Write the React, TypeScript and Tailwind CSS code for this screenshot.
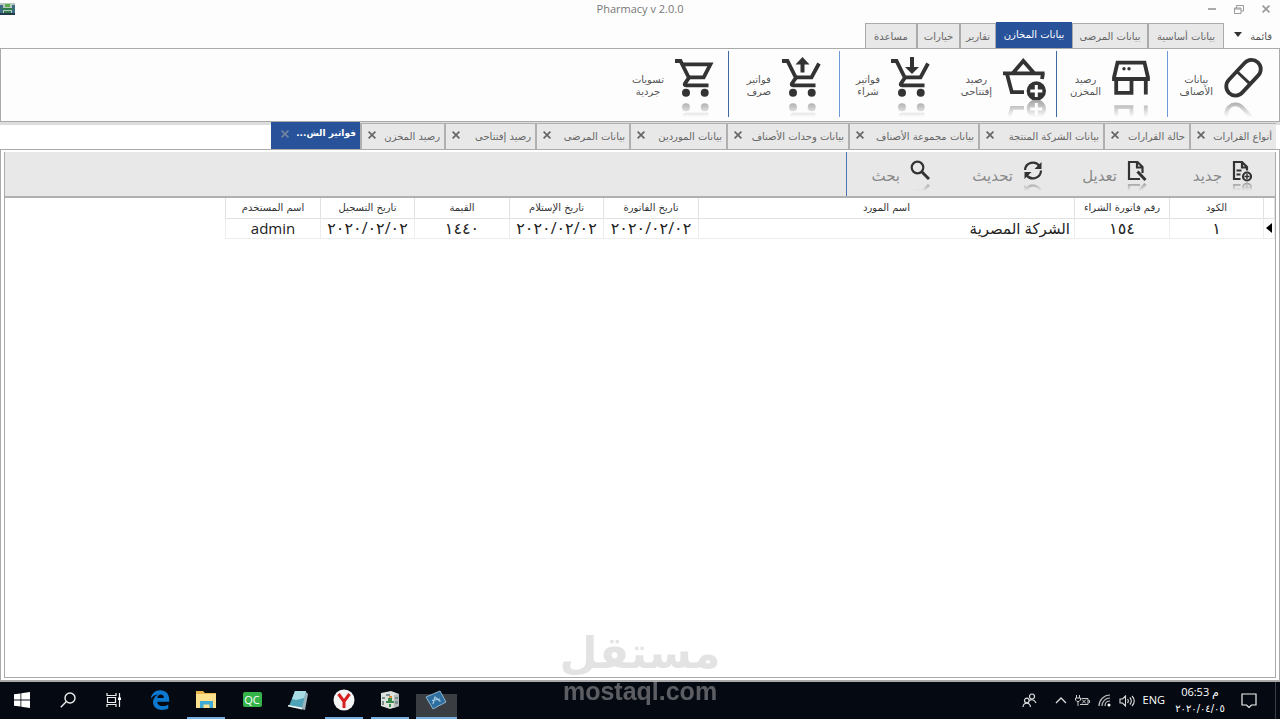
import type { ReactNode } from "react";
import clsx from "clsx";

const ribbonTabs = [
  { label: "بيانات أساسية", width: "w-[76px]" },
  { label: "بيانات المرضى", width: "w-[76px]" },
  { label: "بيانات المخازن", width: "w-[76px]", active: true },
  { label: "تقارير", width: "w-[36px]" },
  { label: "خيارات", width: "w-[43px]" },
  { label: "مساعدة", width: "w-[52px]" },
];

const docTabs = [
  { label: "أنواع القرارات", width: "w-[87px]" },
  { label: "حالة القرارات", width: "w-[86px]" },
  { label: "بيانات الشركة المنتجة", width: "w-[125px]" },
  { label: "بيانات مجموعة الأصناف", width: "w-[130px]" },
  { label: "بيانات وحدات الأصناف", width: "w-[122px]" },
  { label: "بيانات الموردين", width: "w-[97px]" },
  { label: "بيانات المرضى", width: "w-[94px]" },
  { label: "رصيد إفتتاحى", width: "w-[91px]" },
  { label: "رصيد المخزن", width: "w-[84px]" },
  { label: "فواتير الش...", width: "w-[89px]", active: true },
];

const columns = [
  { title: "الكود", value: "١", width: "w-[94px]", cell: "text-center text-base" },
  { title: "رقم فاتورة الشراء", value: "١٥٤", width: "w-[95px]", cell: "text-center text-base" },
  { title: "اسم المورد", value: "الشركة المصرية", width: "w-[376px]", cell: "ps-1 text-start text-[15px]" },
  { title: "تاريخ الفاتورة", value: "٢٠٢٠/٠٢/٠٢", width: "w-[95px]", cell: "text-center text-base" },
  { title: "تاريخ الإستلام", value: "٢٠٢٠/٠٢/٠٢", width: "w-[94px]", cell: "text-center text-base" },
  { title: "القيمة", value: "١٤٤٠", width: "w-[95px]", cell: "text-center text-base" },
  { title: "تاريخ التسجيل", value: "٢٠٢٠/٠٢/٠٢", width: "w-[94px]", cell: "text-center text-base" },
  { title: "اسم المستخدم", value: "admin", width: "w-[95px]", cell: "text-center text-[15px]" },
];

const reflect =
  "[-webkit-box-reflect:below_0_linear-gradient(transparent_60%,rgba(0,0,0,0.45))]";

function BigIcon({ children, wide }: { children: ReactNode; wide?: boolean }) {
  return (
    <svg
      viewBox={wide ? "0 0 46 43" : "0 0 40 43"}
      className={clsx("h-[43px] shrink-0", wide ? "w-[46px]" : "w-10", reflect)}
      fill="none"
      stroke="#333"
      strokeWidth="3.8"
    >
      {children}
    </svg>
  );
}

function SmallIcon({ children }: { children: ReactNode }) {
  return (
    <svg
      viewBox="0 0 20 22"
      className={clsx("h-[22px] w-5 shrink-0", reflect)}
      fill="none"
      stroke="#333"
      strokeWidth="2.2"
    >
      {children}
    </svg>
  );
}

function CartBase() {
  return (
    <>
      <path d="M1 4H6.5L15 21M15 20.6 11 26.4Q10 28.3 12 28.3H34.5" />
      <circle cx="12" cy="35.7" r="4" fill="#333" stroke="none" />
      <circle cx="30.7" cy="35.7" r="4" fill="#333" stroke="none" />
    </>
  );
}

function PillIcon() {
  return (
    <BigIcon>
      <g transform="rotate(-47 20.5 20.7)">
        <rect x="-.5" y="11.5" width="42" height="18.4" rx="9.2" />
        <path d="M20.5 12v18" strokeWidth="3" />
      </g>
    </BigIcon>
  );
}

function StoreIcon() {
  return (
    <BigIcon>
      <path d="M6.5 5.6H33.5L37 20.5V22H3V20.5Z" />
      <path d="M5.2 22V35.8H20.5V22M34.8 22V37.6" />
      <circle cx="13" cy="11.7" r="1.7" fill="#333" stroke="none" />
      <circle cx="18" cy="11.7" r="1.7" fill="#333" stroke="none" />
    </BigIcon>
  );
}

function BasketIcon() {
  return (
    <BigIcon wide>
      <path d="M1 16.3H42.5M11 16 21.3 4 32 16M5 17 9.8 35.2H22M41 16 40 22" />
      <circle cx="34.3" cy="34" r="9.7" fill="#333" stroke="none" />
      <path d="M34.3 28v12M28.3 34h12" stroke="#fff" strokeWidth="3" />
    </BigIcon>
  );
}

function CartDownIcon() {
  return (
    <BigIcon>
      <CartBase />
      <path d="M15 20.3H30.5L38 6.5" />
      <path d="M22 0v11" strokeWidth="4" />
      <path d="M15 10h14l-7 7z" fill="#333" stroke="none" />
    </BigIcon>
  );
}

function CartUpIcon() {
  return (
    <BigIcon>
      <CartBase />
      <path d="M15 20.3H30.5L38 6.5" />
      <path d="M21.5 6v9.5" strokeWidth="4" />
      <path d="M14.5 7.5h14l-7-7.5z" fill="#333" stroke="none" />
    </BigIcon>
  );
}

function CartIcon() {
  return (
    <BigIcon>
      <CartBase />
      <path d="M8 7.4H36.4L29.7 20.3H15" />
    </BigIcon>
  );
}

function CloseGlyph() {
  return (
    <svg viewBox="0 0 8 8" className="size-2" fill="none" stroke="currentColor" strokeWidth="1.7">
      <path d="M.6.6 7.4 7.4M7.4.6.6 7.4" />
    </svg>
  );
}

type RibbonButtonProps = {
  icon: ReactNode;
  lines: [string, string];
  className: string;
};

function RibbonButton({ icon, lines, className }: RibbonButtonProps) {
  return (
    <button className={clsx("flex h-[66px] items-start gap-2.5 pt-1.5", className)}>
      {icon}
      <span className="pt-[17px] text-center text-[10px] leading-3 text-[#555]">
        {lines[0]}
        <br />
        {lines[1]}
      </span>
    </button>
  );
}

function RibbonDivider({ light }: { light?: boolean }) {
  return <span className={clsx("h-[66px] w-px", light ? "bg-[#6f98d8]" : "bg-[#3f6ba3]")} />;
}

function TitleBar() {
  return (
    <header className="flex h-[22px] items-center justify-between pb-1">
      <div dir="ltr" className="order-3 flex w-24">
        <svg viewBox="0 0 15 12" className="h-3 w-[15px]">
          <path fill="#b9c9c4" d="M0 0h15v12H0z" />
          <path fill="#3c6b86" d="M0 2h3v8H0zM12 2h3v8h-3z" />
          <path fill="#2e7d4f" d="M2 5h11v2H2zM4 8h7v4H4z" />
          <path fill="#5fae49" d="M5 1h5v3H5z" />
          <path fill="#24384a" d="M0 10h15v2H0z" />
        </svg>
      </div>
      <h1 className="order-2 font-['Open_Sans'] text-[11px] leading-4 text-[#777]">Pharmacy v 2.0.0</h1>
      <div className="order-1 flex w-24 items-center gap-[18px] ps-2.5 text-[#999]">
        <button aria-label="إغلاق">
          <CloseGlyph />
        </button>
        <button aria-label="استعادة">
          <svg viewBox="0 0 10 9" className="h-[9px] w-2.5" fill="none" stroke="currentColor">
            <path d="M.5 3h6.5v5.5H.5zM.5 4h6.5M2.5 3V.5h7V6H7" />
          </svg>
        </button>
        <button aria-label="تصغير" className="h-0.5 w-2 bg-[#aaa]" />
      </div>
    </header>
  );
}

function Ribbon() {
  return (
    <>
      <nav className="flex items-end">
        <button className="flex h-[26px] w-14 items-center justify-between ps-2 pe-2.5 pt-0.5 text-[10px] text-[#555]">
          قائمة
          <svg viewBox="0 0 8 5" className="mb-1 h-[5px] w-2" fill="#333">
            <path d="M0 0h8L4 5z" />
          </svg>
        </button>
        {ribbonTabs.map((tab) => (
          <button
            key={tab.label}
            className={clsx(
              "whitespace-nowrap text-center text-[10px]",
              tab.width,
              tab.active
                ? "h-[26px] bg-[#28529a] pb-0.5 text-white"
                : "h-[25px] border border-b-0 border-[#aaa] bg-[#e8e8e8] text-[#666]",
            )}
          >
            {tab.label}
          </button>
        ))}
      </nav>
      <section className="flex h-[74px] items-start border border-[#aaa] bg-[#fdfdfd] pt-0.5">
        <RibbonButton className="w-[111px] ps-4" icon={<PillIcon />} lines={["بيانات", "الأصناف"]} />
        <RibbonDivider light />
        <RibbonButton className="w-[110px] ps-4" icon={<StoreIcon />} lines={["رصيد", "المخزن"]} />
        <RibbonDivider />
        <RibbonButton className="w-[116px] ps-2" icon={<BasketIcon />} lines={["رصيد", "إفتتاحى"]} />
        <RibbonButton className="w-[100px] ps-2.5" icon={<CartDownIcon />} lines={["فواتير", "شراء"]} />
        <RibbonDivider light />
        <RibbonButton className="w-[110px] ps-[18px]" icon={<CartUpIcon />} lines={["فواتير", "صرف"]} />
        <RibbonDivider />
        <RibbonButton className="w-[110px] ps-3.5" icon={<CartIcon />} lines={["تسويات", "جردية"]} />
      </section>
    </>
  );
}

function DocumentTabs() {
  return (
    <div className="flex h-[27px] items-end bg-linear-to-b from-[#ddd] from-10% to-white to-10% ps-1">
      {docTabs.map((tab) => (
        <div
          key={tab.label}
          className={clsx(
            "flex items-center justify-between whitespace-nowrap pb-1",
            tab.width,
            tab.active
              ? "h-[27px] bg-[#28529a] ps-1 pe-2.5 text-[9px] font-bold text-white"
              : "h-[26px] border-e-2 border-t border-[#b0b0b0] bg-[#e8e8e8] ps-1 pe-1.5 text-[10px] text-[#666]",
          )}
        >
          <button className={clsx(!tab.active && "pt-1")}>{tab.label}</button>
          <button aria-label="إغلاق" className={tab.active ? "text-[#7482a0]" : "text-[#666]"}>
            <CloseGlyph />
          </button>
        </div>
      ))}
    </div>
  );
}

function ToolButton({ icon, label, className }: { icon: ReactNode; label: string; className: string }) {
  return (
    <button className={clsx("flex h-11 items-start gap-2.5 pt-2", className)}>
      {icon}
      <span className="pt-1.5 text-[15px] leading-5 text-[#888]">{label}</span>
    </button>
  );
}

function Toolbar() {
  return (
    <div className="flex h-[46px] items-start border-b-2 border-[#b0b0b0] bg-[#e8e8e8]">
      <ToolButton
        className="w-[105px] ps-[23px]"
        label="جديد"
        icon={
          <SmallIcon>
            <path d="M8.5 19H2V2h8l5 5v3.5M10 2v5.5h5M4.5 10.5h5M4.5 14.5h4" />
            <circle cx="15" cy="16.5" r="4" />
            <path d="M15 14v5M12.5 16.5h5" strokeWidth="1.4" />
          </SmallIcon>
        }
      />
      <ToolButton
        className="w-[105px] ps-[23px]"
        label="تعديل"
        icon={
          <SmallIcon>
            <path d="M13 19H2V2h8.5l5 5v6M10 2v5.5h5.5" />
            <path d="m10.5 11.5 8 8.5" strokeWidth="3" />
          </SmallIcon>
        }
      />
      <ToolButton
        className="w-[105px] ps-[22px]"
        label="تحديث"
        icon={
          <SmallIcon>
            <path d="M2 10A8 8 0 0 1 16.5 6M18 10.5A8 8 0 0 1 3.5 15" />
            <path d="M18.5 2v7h-7zM1.5 19v-7h7z" fill="#333" stroke="none" />
          </SmallIcon>
        }
      />
      <ToolButton
        className="w-[113px] ps-[30px]"
        label="بحث"
        icon={
          <SmallIcon>
            <circle cx="7.5" cy="7.5" r="5.8" />
            <path d="m11.5 11.5 7.5 7.5" strokeWidth="3" />
          </SmallIcon>
        }
      />
      <span className="h-11 w-px bg-[#4a74b4]" />
    </div>
  );
}

function InvoiceTable() {
  return (
    <table className="w-[1049px] table-fixed border-collapse">
      <thead>
        <tr className="h-5">
          <th className="w-[11px] border border-t-0 border-[#e2e2e2]" />
          {columns.map((column) => (
            <th
              key={column.title}
              className={clsx("border border-t-0 border-[#e2e2e2] p-0 text-[10px] leading-4 font-normal text-[#333]", column.width)}
            >
              {column.title}
            </th>
          ))}
        </tr>
      </thead>
      <tbody>
        <tr className="h-5">
          <td className="border border-[#ededed] p-0">
            <svg viewBox="0 0 6 10" className="ms-0.5 h-2.5 w-1.5" fill="#000">
              <path d="M6 0v10L0 5z" />
            </svg>
          </td>
          {columns.map((column) => (
            <td
              key={column.title}
              className={clsx(
                "border border-[#ededed] p-0 font-['Open_Sans','DejaVu_Sans',sans-serif] leading-[19px] text-[#222]",
                column.cell,
              )}
            >
              {column.value}
            </td>
          ))}
        </tr>
      </tbody>
    </table>
  );
}

function TaskButton({ label, children, open, active }: { label: string; children: ReactNode; open?: boolean; active?: boolean }) {
  return (
    <button aria-label={label} className="flex h-full w-[46px] flex-col items-center justify-end">
      <span
        className={clsx(
          "flex flex-1 items-center justify-center border-b-2",
          open || active ? "border-[#76b0e0]" : "border-transparent",
          active ? "w-[41px] bg-linear-to-b from-transparent from-35% to-[#3a3d42] to-35%" : "w-[38px]",
        )}
      >
        {children}
      </span>
    </button>
  );
}

function Taskbar() {
  return (
    <footer dir="ltr" className="flex h-[37px] items-center justify-between bg-[#050a12] text-white">
      <div className="-ms-px flex h-full">
        <TaskButton label="Start">
          <svg viewBox="0 0 16 16" className="size-4" fill="#fff">
            <path d="M0 2.3 6.5 1.4V7.6H0zM7.3 1.3 16 0v7.6H7.3zM0 8.4h6.5v6.2L0 13.7zM7.3 8.4H16V16l-8.7-1.3z" />
          </svg>
        </TaskButton>
        <TaskButton label="Search">
          <svg viewBox="0 0 16 16" className="size-4" fill="none" stroke="#eee" strokeWidth="1.4">
            <circle cx="10" cy="6" r="5" />
            <path d="M6.4 9.6.8 15.2" />
          </svg>
        </TaskButton>
        <TaskButton label="Task view">
          <svg viewBox="0 0 16 16" className="size-4" fill="none" stroke="#eee" strokeWidth="1.2">
            <path d="M1 1v2.5h9V1M1.5 5.5h8v5h-8zM1 15v-2.5h9V15M13.5 1v14" />
            <path d="M12 5.5h3v2.5h-3z" fill="#fff" stroke="none" />
          </svg>
        </TaskButton>
        <TaskButton label="Edge">
          <svg viewBox="0 0 20 20" className="size-5" fill="#0c78d0">
            <path d="M.8 8.8C1.5 3.5 5.2.3 10.3.3c5.4 0 8.9 3.7 8.9 9.2v2.2H7.2c.2 3 2.5 4.4 5.6 4.4 2 0 3.9-.5 5.5-1.5v3.9c-1.900 1-4 1.400-6.500 1.400C6.500 19.900 3 16.900 3 12.100c0-3.400 1.900-6.100 4.900-7.700C4.800 4.600 2.300 6.200.8 8.800M7.300 8h6.600c0-2.100-1-3.400-3.100-3.400C8.900 4.600 7.600 5.900 7.300 8" />
          </svg>
        </TaskButton>
        <TaskButton label="File Explorer" open>
          <svg viewBox="0 0 20 17" className="h-[17px] w-5">
            <path fill="#e8b64a" d="M0 0h7l2 2h11v4H0z" />
            <path fill="#fbe08d" d="M0 3h20v14H0z" />
            <path fill="#3fa9d4" d="M4 10h13v7h-3.5v-3.5h-6V17H4z" />
          </svg>
        </TaskButton>
        <TaskButton label="QC">
          <span className="flex h-[15px] w-[19px] items-center justify-center rounded-[2px] bg-[#35b44a] font-['Open_Sans'] text-[11px] leading-3">
            QC
          </span>
        </TaskButton>
        <TaskButton label="Notepad">
          <svg viewBox="0 0 22 20" className="h-5 w-[22px]">
            <path fill="#9db3bb" d="m18 1 3 3-3 16-4-1z" />
            <path fill="#4fa3b8" d="M8 1h11l-4 17-13-2z" />
            <path fill="#a9dbe4" d="M8 1h11l-2 7-8 2-4-1z" />
            <path fill="#f1f7f8" d="m1 15 14 2.500v2L1 16.500z" />
          </svg>
        </TaskButton>
        <TaskButton label="Yandex" open>
          <svg viewBox="0 0 22 22" className="size-[22px]">
            <circle cx="11" cy="11" r="10.5" fill="#f4f4f4" />
            <path d="m5.5 5 5.5 7.5L16.5 5M11 12v7" fill="none" stroke="#d5201f" strokeWidth="3" />
          </svg>
        </TaskButton>
        <TaskButton label="Pharmacy" open>
          <svg viewBox="0 0 20 20" className="size-5">
            <path fill="#dfe1dc" d="m1 3 10-2 8 3v12l-9 3-9-3z" />
            <path fill="#b3bab8" d="m14 5 5-1v12l-5 2z" />
            <path fill="#7e8f93" d="M2 7h3v2H2zM6 4h4v2H6zM2 11h2v4H2zM15 7h3v2h-3zM15 11h3v3h-3z" />
            <path fill="#3b8b4b" d="M8 8h4v3h2v2H6v-2h2zM9 14h2v3H9z" />
            <path fill="#d98d3a" d="M9 6h3v2H9z" />
          </svg>
        </TaskButton>
        <TaskButton label="Designer" active>
          <svg viewBox="0 0 22 20" className="h-5 w-[22px]">
            <path fill="#2f6f9f" stroke="#8db4cf" d="m1 7 14-6 6 11-13 7z" />
            <path d="m8 14 2-7 5.5 4.5M7 10.5l8-1.5" fill="none" stroke="#a6cbe2" strokeWidth="1.2" />
          </svg>
        </TaskButton>
      </div>
      <div className="flex h-full items-center gap-2 font-['Open_Sans','DejaVu_Sans',sans-serif]">
        <svg viewBox="0 0 15 15" className="me-2.5 size-[15px]" fill="none" stroke="#ddd" strokeWidth="1.2">
          <circle cx="10" cy="3.5" r="2.5" />
          <path d="M7.5 8C8 6.5 12 5.5 14 10" />
          <circle cx="4.8" cy="7.5" r="2.3" />
          <path d="M1 14c.5-5 7-5 7.5 0" />
        </svg>
        <svg viewBox="0 0 12 7" className="h-[7px] w-3" fill="none" stroke="#ddd" strokeWidth="1.3">
          <path d="m1 6 5-5 5 5" />
        </svg>
        <svg viewBox="0 0 15 12" className="h-3 w-[15px]" fill="none" stroke="#ccc">
          <path d="M1.5 0v3M4.5 0v3M.5 3h5v2l-1.500 1.500h-2L.5 5zM3 6.500V11M6.500 3.500H13v6H5M13.500 5.500h1v2h-1M7 4.500l4 4M11 4.500l-4 4" />
        </svg>
        <svg viewBox="0 0 13 13" className="size-[13px]" fill="none" stroke="#bbb" strokeWidth="1.2">
          <path d="M1 12C1 6 6 1 12 1M4 12c0-4.500 3.500-8 8-8M7 12c0-3 2-5 5-5" />
          <circle cx="11" cy="11" r="1.5" fill="#fff" stroke="none" />
        </svg>
        <svg viewBox="0 0 16 12" className="h-3 w-4" fill="none" stroke="#ddd" strokeWidth="1.1">
          <path d="M1 4h2.500L6.500 1v10l-3-3H1zM8.500 4c1 1.200 1 2.800 0 4M10.800 2.500c2 2 2 5 0 7M13 1c3 3 3 7 0 10" />
        </svg>
        <span className="text-[11px]">ENG</span>
        <time dir="rtl" className="ms-1 w-[54px] text-center text-[11px] leading-4">
          م <bdi>06:53</bdi>
          <br />
          <span className="font-['DejaVu_Sans'] text-[10px]">٢٠٢٠/٠٤/٠٥</span>
        </time>
        <button aria-label="Notifications" className="ms-0.5 me-[18px]">
          <svg viewBox="0 0 16 16" className="size-4" fill="none" stroke="#eee" strokeWidth="1.2">
            <path d="M1 1h14v11h-4.500L8 14.500 5.500 12H1z" />
          </svg>
        </button>
        <span className="-ms-2 me-1 h-full w-px bg-[#3a3f46]" />
      </div>
    </footer>
  );
}

export default function App() {
  return (
    <div dir="rtl" className="relative flex h-screen flex-col bg-[#fdfdfd] font-['DejaVu_Sans',sans-serif]">
      <TitleBar />
      <Ribbon />
      <DocumentTabs />
      <main className="flex flex-1 flex-col border border-b-2 border-[#aaa] bg-white px-[3px] pt-0.5 pb-0.5">
        <div className="flex-1 border border-t-0 border-[#aaa]">
          <Toolbar />
          <InvoiceTable />
        </div>
      </main>
      <Taskbar />
      <div className="pointer-events-none absolute inset-x-0 bottom-3.5 flex flex-col items-center font-bold text-[#c3c3c3] opacity-45">
        <span className="text-[44px] leading-12">مستقل</span>
        <span dir="ltr" className="font-['Liberation_Sans',sans-serif] text-[25px] leading-7">
          mostaql.com
        </span>
      </div>
    </div>
  );
}
